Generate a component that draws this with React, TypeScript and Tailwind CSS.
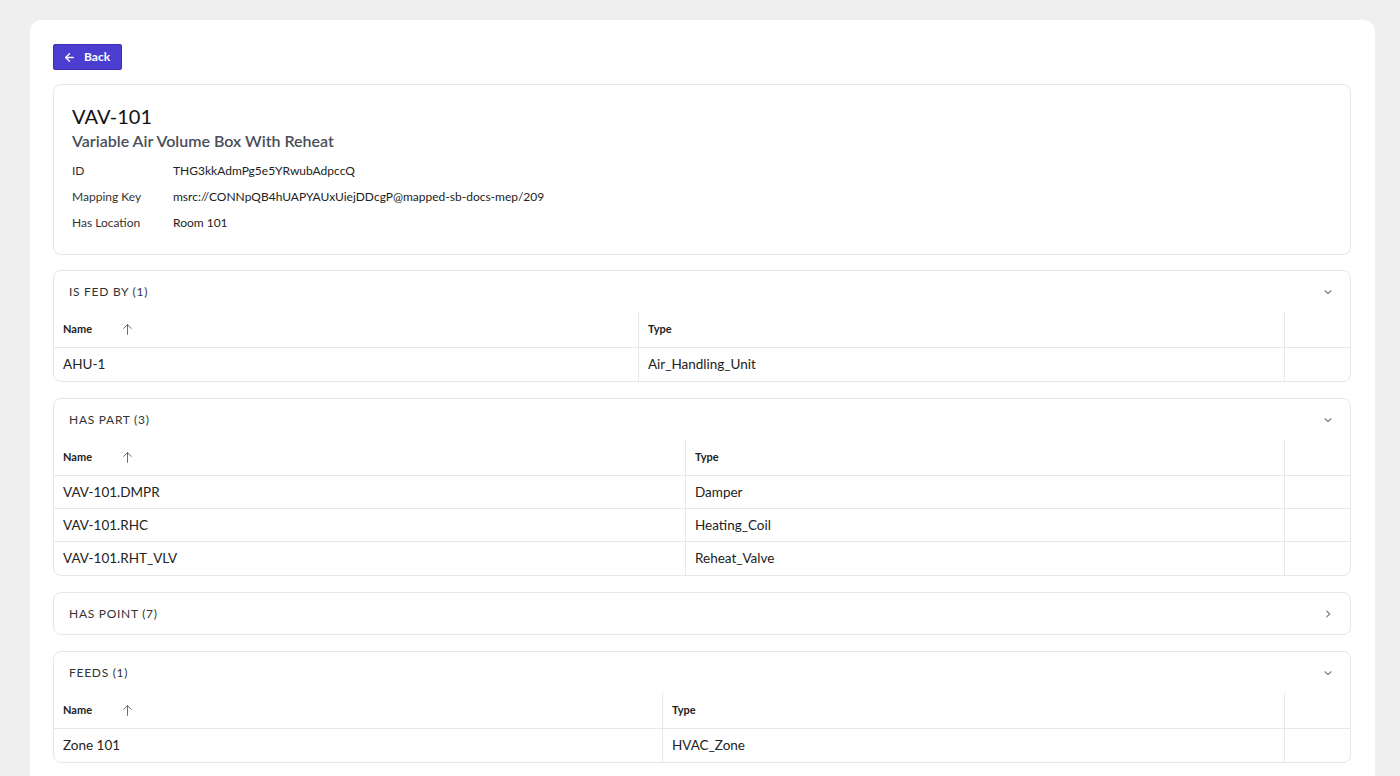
import React from "react";

const font = { fontFamily: "Lato, 'Noto Sans', sans-serif" };

function ArrowLeft() {
  return (
    <svg width="13" height="13" viewBox="0 0 24 24" fill="none" stroke="currentColor" strokeWidth="2.4" strokeLinecap="round" strokeLinejoin="round">
      <path d="M19 12H5" />
      <path d="M12 19l-7-7 7-7" />
    </svg>
  );
}

function ArrowUp() {
  return (
    <svg width="13" height="13" viewBox="0 0 24 24" fill="none" stroke="#555" strokeWidth="1.6" strokeLinecap="round" strokeLinejoin="round">
      <path d="M12 21V3" />
      <path d="M5 10l7-7 7 7" />
    </svg>
  );
}

function Chevron({ open }: { open: boolean }) {
  return (
    <svg width="10" height="10" viewBox="0 0 24 24" fill="none" stroke="#777" strokeWidth="2.6" strokeLinecap="round" strokeLinejoin="round">
      {open ? <path d="M5 9l7 7 7-7" /> : <path d="M9 5l7 7-7 7" />}
    </svg>
  );
}

type Row = [string, string];

function Section({ title, rows, w1, w2, open = true }: { title: string; rows?: Row[]; w1: number; w2: number; open?: boolean }) {
  return (
    <div className="rounded-lg border border-[#e6e6e6] bg-white overflow-hidden">
      <div className="h-[41px] flex items-center justify-between pl-[15px] pr-[17px]">
        <span className="text-[12px] tracking-[0.06em] text-[#333] uppercase">{title}</span>
        <Chevron open={open} />
      </div>
      {open && rows && (
        <div>
          <div className="flex h-[36px] border-b border-[#e8e8e8]">
            <div className="flex items-center pl-[9px] border-r border-[#e8e8e8]" style={{ width: w1 }}>
              <span className="text-[11px] font-bold text-[#222] w-[58px]">Name</span>
              <ArrowUp />
            </div>
            <div className="flex items-center pl-[9px] border-r border-[#e8e8e8]" style={{ width: w2 }}>
              <span className="text-[11px] font-bold text-[#222]">Type</span>
            </div>
            <div className="flex-1" />
          </div>
          {rows.map((r, i) => (
            <div key={i} className={`flex h-[33px] ${i < rows.length - 1 ? "border-b border-[#e8e8e8]" : ""}`}>
              <div className="flex items-center pl-[9px] border-r border-[#e8e8e8]" style={{ width: w1 }}>
                <span className="text-[13.5px] text-[#222]">{r[0]}</span>
              </div>
              <div className="flex items-center pl-[9px] border-r border-[#e8e8e8]" style={{ width: w2 }}>
                <span className="text-[13.5px] text-[#222]">{r[1]}</span>
              </div>
              <div className="flex-1" />
            </div>
          ))}
        </div>
      )}
    </div>
  );
}

export default function App() {
  return (
    <div className="bg-[#efefef] pt-[20px] pl-[30px] pr-[25px] overflow-hidden h-[776px]" style={font}>
      <div className="bg-white rounded-t-[12px] h-[800px] pt-[24px] pl-[23px] pr-[24px]">
        <button className="flex items-center gap-[8px] h-[26px] pl-[9px] pr-[11px] bg-[#4a3dd0] border border-[#3a2fb5] rounded-[2px] text-white text-[12px] font-bold">
          <ArrowLeft />
          <span>Back</span>
        </button>
        <div className="mt-[14px] flex flex-col gap-[15px]">
          <div className="rounded-lg border border-[#e6e6e6] bg-white h-[171px] pl-[18px] pt-[18px]">
            <div className="text-[20px] leading-[26px] text-[#111]">VAV-101</div>
            <div className="text-[16px] font-semibold text-[#4a4f5a] mt-[1px] leading-[22px]">Variable Air Volume Box With Reheat</div>
            <div className="mt-[6px] flex flex-col text-[12px] text-[#222]">
              {[
                ["ID", "THG3kkAdmPg5e5YRwubAdpccQ"],
                ["Mapping Key", "msrc://CONNpQB4hUAPYAUxUiejDDcgP@mapped-sb-docs-mep/209"],
                ["Has Location", "Room 101"],
              ].map(([k, v]) => (
                <div key={k} className="flex h-[26px] items-center">
                  <span className="w-[101px] text-[#333]">{k}</span>
                  <span>{v}</span>
                </div>
              ))}
            </div>
          </div>
          <div className="flex flex-col gap-[16px]">
            <Section title="Is fed by (1)" w1={585} w2={646} rows={[["AHU-1", "Air_Handling_Unit"]]} />
            <Section
              title="Has part (3)"
              w1={632}
              w2={599}
              rows={[
                ["VAV-101.DMPR", "Damper"],
                ["VAV-101.RHC", "Heating_Coil"],
                ["VAV-101.RHT_VLV", "Reheat_Valve"],
              ]}
            />
            <Section title="Has point (7)" w1={0} w2={0} open={false} />
            <Section title="Feeds (1)" w1={609} w2={622} rows={[["Zone 101", "HVAC_Zone"]]} />
          </div>
        </div>
      </div>
    </div>
  );
}
